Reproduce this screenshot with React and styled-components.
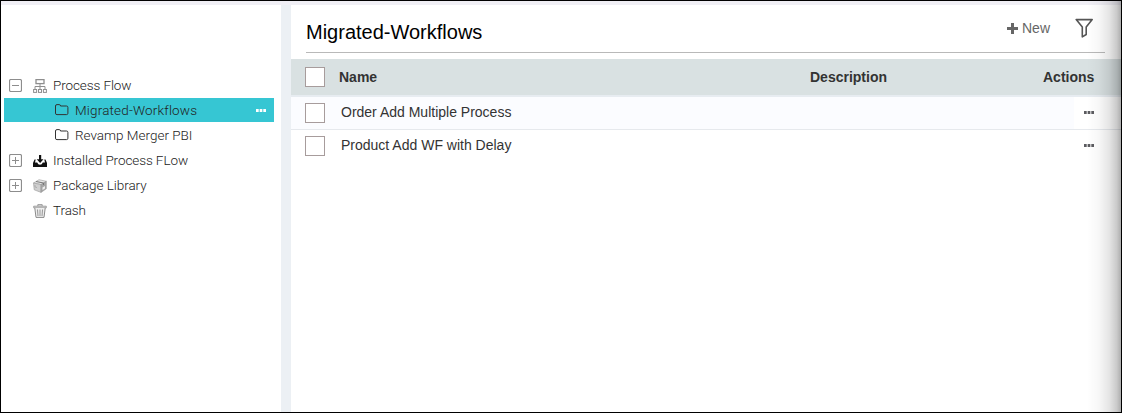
import React from 'react';
import styled, { createGlobalStyle } from 'styled-components';

const GlobalStyle = createGlobalStyle`
  * { box-sizing: border-box; }
  body { margin: 0; background: #fff; font-family: "Liberation Sans", Arial, sans-serif; }
`;

const Window = styled.div`
  position: relative;
  display: flex;
  flex-direction: column;
  width: 1122px;
  height: 413px;
  border: 1px solid #000;
  background: #fff;
  overflow: hidden;
`;

const TopStrip = styled.div`
  height: 4px;
  flex: none;
  background: #f0eff5;
`;

const Body = styled.div`
  display: flex;
  flex: 1;
  min-height: 0;
`;

const Sidebar = styled.nav`
  width: 280px;
  padding: 68px 7px 0 3px;
`;

const Gutter = styled.div`
  width: 10px;
  background: #ecf0f4;
`;

const TreeRow = styled.div`
  display: flex;
  align-items: center;
  height: 24px;
  margin-bottom: 1px;
  padding-left: ${(p) => (p.$child ? 51 : 5)}px;
  padding-right: 8px;
  background: ${(p) => (p.$selected ? '#36c6d3' : 'transparent')};
`;

const Toggle = styled.span`
  display: flex;
  width: 24px;
  flex: none;
  padding-top: 1px;
`;

const NodeIcon = styled.span`
  display: flex;
  width: 20px;
  flex: none;
  padding-top: ${(p) => (p.$child ? 0 : 2)}px;
`;

const Label = styled.span`
  flex: 1;
  padding-top: 1px;
  font: 300 13.5px/23px Roboto, "Open Sans", sans-serif;
  letter-spacing: ${(p) => p.$spacing || 0}px;
  color: #222;
  white-space: nowrap;
`;

const Main = styled.main`
  flex: 1;
  display: flex;
  flex-direction: column;
`;

const TitleBar = styled.header`
  display: flex;
  height: 48px;
  margin: 0 16px 6px 15px;
  border-bottom: 1px solid #b9b9b9;
`;

const Title = styled.h1`
  flex: 1;
  margin: 0;
  padding-top: 15px;
  font-size: 20px;
  line-height: 24px;
  font-weight: 400;
  color: #000;
`;

const NewButton = styled.button`
  display: flex;
  align-items: center;
  gap: 4px;
  height: 20px;
  margin: 13px 25px 0 0;
  padding: 0;
  border: 0;
  background: none;
  font: 14px/20px "Liberation Sans", Arial, sans-serif;
  color: #666;
`;

const FilterButton = styled.button`
  display: flex;
  width: 19px;
  height: 20px;
  margin: 13px 11px 0 0;
  padding: 0;
  border: 0;
  background: none;
`;

const TableRow = styled.div`
  display: grid;
  grid-template-columns: 36px 469px 1fr 78px;
  align-items: center;
  height: 33px;
  padding-left: 14px;
  border-bottom: 1px solid ${(p) => (p.$last ? 'transparent' : '#e6e9ed')};
  background: ${(p) => (p.$striped ? '#fbfcff' : '#fff')};
  font-size: 14px;
  line-height: 18px;
  color: #333;
`;

const HeaderRow = styled(TableRow)`
  grid-template-columns: 34px 471px 1fr 78px;
  height: 38px;
  border-bottom: 2px solid #e7ecf1;
  background: #d9e1e2;
  font-weight: 700;
`;

const Checkbox = styled.span`
  width: 20px;
  height: 20px;
  border: 1px solid #a79c9c;
  background: #fff;
`;

const Name = styled.span`
  padding-bottom: 2px;
`;

const RowAction = styled.span`
  display: flex;
  align-items: center;
  align-self: stretch;
  justify-content: flex-end;
  padding: 0 27px 2px 0;
  margin-left: 31px;
  background: #fff;
`;

const EdgeShade = styled.div`
  position: absolute;
  top: 0;
  right: 0;
  bottom: 0;
  width: 34px;
  pointer-events: none;
  background: linear-gradient(
    to right,
    rgba(0, 0, 0, 0),
    rgba(0, 0, 0, 0.03) 35%,
    rgba(0, 0, 0, 0.1) 65%,
    rgba(0, 0, 0, 0.21) 88%,
    rgba(0, 0, 0, 0.32)
  );
`;

const ToggleIcon = ({ open }) => (
  <svg width="13" height="13" viewBox="0 0 13 13" fill="none" stroke="#8d8d8d">
    <rect x="0.5" y="0.5" width="12" height="12" rx="1.5" strokeWidth="1.2" />
    <path d={open ? 'M3 6.5h7' : 'M3 6.5h7M6.5 3v7'} />
  </svg>
);

const FlowIcon = () => (
  <svg width="14" height="14" viewBox="0 0 14 14" fill="none" stroke="#8e8e8e">
    <rect x="3" y="0.6" width="8" height="4" strokeWidth="1.3" />
    <path d="M7 5v5M2 10V7.5h10V10" />
    <rect x="0.6" y="10.5" width="3" height="2.9" />
    <rect x="5.5" y="10.5" width="3" height="2.9" />
    <rect x="10.4" y="10.5" width="3" height="2.9" />
  </svg>
);

const FolderIcon = () => (
  <svg width="14" height="12" viewBox="0 0 14 12" fill="none" stroke="#333">
    <path d="M.5 9.5V2Q.5.6 2 .6h2.3q1.2 0 1.2 1.4h6q1.4 0 1.4 1.4V9.3q0 1.3-1.4 1.3H2Q.5 10.6.5 9.3z" />
  </svg>
);

const InstallIcon = () => (
  <svg width="14" height="13" viewBox="0 0 14 13" fill="#111">
    <path d="M6 0h2.2v4.3h2.3L7.1 8 3.7 4.3H6z" />
    <path d="M1.5 4.5h1.2L2 7.5h2.2Q5 9.8 7 9.8t2.8-2.3H12l-.7-3h1.2L14 8V12H0V8z" />
  </svg>
);

const PackageIcon = () => (
  <svg width="14" height="14" viewBox="0 0 14 14" stroke="#999" strokeWidth=".6">
    <path d="M.5 4 6 .7l7.3 1.6L8 5.6z" fill="#e6e6e6" />
    <path d="M.5 4 8 5.6v7.8L1.2 10.8z" fill="#cfcfcf" />
    <path d="M8 5.6 13.3 2.3v7.5L8 13.4z" fill="#a6a6a6" />
    <path d="M3 2.5 10.5 4v2" fill="none" stroke="#777" strokeWidth="1" />
    <path d="M9.5 8.5 12 7v2.5L9.5 11z" fill="#eee" stroke="none" />
    <path d="M2 6v2l2 .6" fill="none" stroke="#999" />
  </svg>
);

const TrashIcon = () => (
  <svg width="14" height="14" viewBox="0 0 14 14" fill="none" stroke="#8a8a8a">
    <path d="M.7 3.8V2.2h12.6v1.6zM4.8 2V.6h4.4V2" fill="#e4e4e4" strokeWidth=".8" />
    <path d="M1.8 4 3 13.4h8L12.2 4" fill="#eee" />
    <path d="M4.5 5.5 5 12M7 5.5V12M9.5 5.5 9 12" strokeWidth=".9" />
  </svg>
);

const DotsIcon = ({ color }) => (
  <svg width="10" height="3" viewBox="0 0 10 3" fill={color}>
    <rect width="2.7" height="3" />
    <rect x="3.65" width="2.7" height="3" />
    <rect x="7.3" width="2.7" height="3" />
  </svg>
);

const PlusIcon = () => (
  <svg width="11" height="11" viewBox="0 0 11 11" fill="#666">
    <path d="M4 0h3v4h4v3H7v4H4V7H0V4h4z" />
  </svg>
);

const FunnelIcon = () => (
  <svg width="19" height="20" viewBox="0 0 19 20" fill="none" stroke="#555" strokeWidth="1.6" strokeLinejoin="round">
    <path d="M1.2 1.6H17.2L11.2 9v7.5L7.3 18.9V9z" />
  </svg>
);

const tree = [
  { label: 'Process Flow', icon: FlowIcon, toggle: 'open', spacing: -0.1 },
  { label: 'Migrated-Workflows', icon: FolderIcon, child: true, selected: true, spacing: 0.17 },
  { label: 'Revamp Merger PBI', icon: FolderIcon, child: true, spacing: 0 },
  { label: 'Installed Process FLow', icon: InstallIcon, toggle: 'closed', spacing: -0.09 },
  { label: 'Package Library', icon: PackageIcon, toggle: 'closed', spacing: -0.05 },
  { label: 'Trash', icon: TrashIcon, spacing: -0.1 },
];

const rows = ['Order Add Multiple Process', 'Product Add WF with Delay'];

export default function App() {
  return (
    <Window>
      <GlobalStyle />
      <TopStrip />
      <Body>
        <Sidebar>
          {tree.map(({ label, icon: Icon, toggle, child, selected, spacing }) => (
            <TreeRow key={label} $child={child} $selected={selected}>
              {!child && <Toggle>{toggle && <ToggleIcon open={toggle === 'open'} />}</Toggle>}
              <NodeIcon $child={child}><Icon /></NodeIcon>
              <Label $spacing={spacing}>{label}</Label>
              {selected && <DotsIcon color="#fff" />}
            </TreeRow>
          ))}
        </Sidebar>
        <Gutter />
        <Main>
          <TitleBar>
            <Title>Migrated-Workflows</Title>
            <NewButton><PlusIcon />New</NewButton>
            <FilterButton aria-label="Filter"><FunnelIcon /></FilterButton>
          </TitleBar>
          <HeaderRow>
            <Checkbox />
            <span>Name</span>
            <span>Description</span>
            <span>Actions</span>
          </HeaderRow>
          {rows.map((name, i) => (
            <TableRow key={name} $striped={i === 0} $last={i === rows.length - 1}>
              <Checkbox />
              <Name>{name}</Name>
              <span />
              <RowAction><DotsIcon color="#5c5c60" /></RowAction>
            </TableRow>
          ))}
        </Main>
      </Body>
      <EdgeShade />
    </Window>
  );
}
